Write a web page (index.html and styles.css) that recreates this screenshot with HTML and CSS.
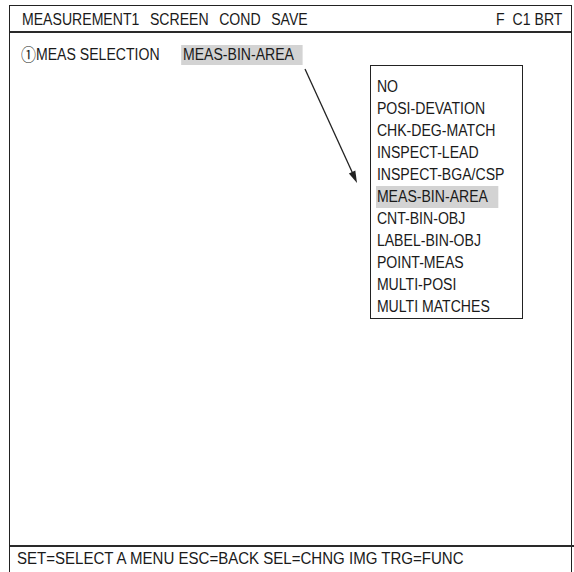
FILE: index.html
```html
<!DOCTYPE html>
<html>
<head>
<meta charset="utf-8">
<link rel="stylesheet" href="styles.css">
</head>
<body>
<div class="screen">
  <header class="topbar">
    <nav class="tabs">
      <span>MEASUREMENT1</span>
      <span>SCREEN</span>
      <span>COND</span>
      <span>SAVE</span>
    </nav>
    <div class="info"><span>F</span><span>C1 BRT</span></div>
  </header>
  <main class="content">
    <div class="row">
      <div class="row-inner">
        <span class="label"><span class="num">①</span>MEAS SELECTION</span>
        <span class="value">MEAS-BIN-AREA</span>
      </div>
    </div>
    <ul class="menu">
      <li><span class="t">NO</span></li>
      <li><span class="t">POSI-DEVATION</span></li>
      <li><span class="t">CHK-DEG-MATCH</span></li>
      <li><span class="t">INSPECT-LEAD</span></li>
      <li><span class="t">INSPECT-BGA/CSP</span></li>
      <li><span class="t hl">MEAS-BIN-AREA</span></li>
      <li><span class="t">CNT-BIN-OBJ</span></li>
      <li><span class="t">LABEL-BIN-OBJ</span></li>
      <li><span class="t">POINT-MEAS</span></li>
      <li><span class="t">MULTI-POSI</span></li>
      <li><span class="t">MULTI MATCHES</span></li>
    </ul>
  </main>
  <footer class="status"><span class="status-text">SET=SELECT A MENU ESC=BACK SEL=CHNG IMG TRG=FUNC</span></footer>
</div>
<svg class="arrow" width="574" height="572" viewBox="0 0 574 572">
  <line x1="305" y1="69" x2="353" y2="174" stroke="#222" stroke-width="1.3"/>
  <polygon points="357,183 348.9,173.5 355.3,170.6" fill="#222"/>
</svg>
</body>
</html>
```

FILE: styles.css
```css
html, body {
  margin: 0;
  padding: 0;
  background: #fff;
}
body {
  position: relative;
  width: 574px;
  height: 572px;
  overflow: hidden;
  font-family: "Liberation Sans", Arial, sans-serif;
  color: #1a1a1a;
}
.screen {
  position: relative;
  margin: 5px 2px 0 9px;
  height: 567px;
  border: 1px solid #222;
  border-bottom: none;
  display: flex;
  flex-direction: column;
  box-sizing: border-box;
}
.topbar {
  height: 27px;
  border-bottom: 2px solid #2a2a2a;
  display: flex;
  justify-content: space-between;
  align-items: center;
  padding: 2px 9px 0 12px;
  font-size: 16px;
  box-sizing: border-box;
}
.tabs {
  display: flex;
  gap: 12px;
  transform: scaleX(0.88);
  transform-origin: left center;
  white-space: nowrap;
}
.info {
  display: flex;
  gap: 9px;
  transform: scaleX(0.88);
  transform-origin: right center;
  white-space: nowrap;
}
.content {
  flex: 1;
  position: relative;
}
.row {
  margin-top: 12px;
  padding-left: 11px;
  font-size: 16px;
  height: 20px;
}
.row-inner {
  display: flex;
  align-items: center;
  transform: scaleX(0.88);
  transform-origin: left center;
  white-space: nowrap;
}
.label {
  width: 182px;
  flex: none;
  display: flex;
  align-items: center;
}
.num {
  font-family: "Noto Sans CJK JP", "DejaVu Sans", sans-serif;
  font-size: 17px;
  line-height: 18px;
  position: relative;
  top: -1px;
}
.value {
  background: #d3d3d3;
  padding: 1px 10px 1px 2px;
}
.menu {
  position: absolute;
  left: 360px;
  top: 32px;
  width: 153px;
  height: 254px;
  box-sizing: border-box;
  margin: 0;
  padding: 10px 0 0 5px;
  list-style: none;
  border: 1.5px solid #222;
  background: #fff;
  font-size: 16px;
}
.menu li {
  line-height: 22px;
  height: 22px;
  white-space: nowrap;
}
.menu .t {
  display: inline-block;
  padding-left: 1px;
  transform: scaleX(0.88);
  transform-origin: left center;
}
.menu .hl {
  background: #d3d3d3;
  padding-right: 12px;
}
.status {
  height: 27px;
  border-top: 2px solid #2a2a2a;
  margin-right: -3px;
  padding-left: 7px;
  font-size: 16px;
  line-height: 24px;
  box-sizing: border-box;
  white-space: nowrap;
}
.status-text {
  display: inline-block;
  transform: scaleX(0.94);
  transform-origin: left center;
}
.arrow {
  position: absolute;
  left: 0;
  top: 0;
  pointer-events: none;
}
```
